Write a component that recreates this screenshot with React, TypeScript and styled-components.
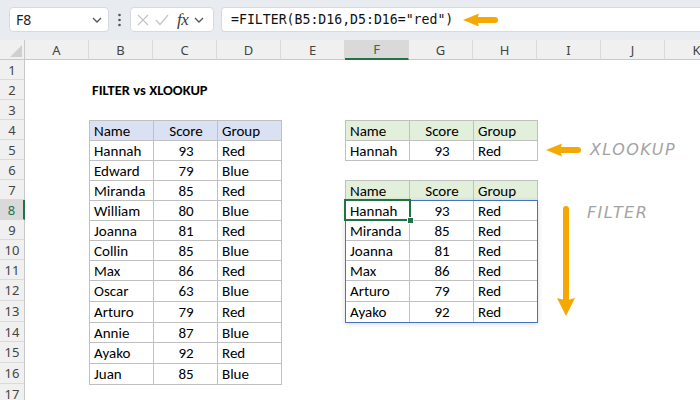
import React from "react";
import styled, { createGlobalStyle } from "styled-components";

const GlobalStyle = createGlobalStyle`
  html, body {
    margin: 0;
    padding: 0;
    background: #ffffff;
  }
  body {
    width: 700px;
    height: 400px;
    overflow: hidden;
    font-family: Calibri, Carlito, Lato, "Liberation Sans", sans-serif;
  }
`;

// data
const COLS = ["A", "B", "C", "D", "E", "F", "G", "H", "I", "J", "K"];
const ROW_HEIGHTS = [20, 20, 20, 20, 20, 20, 20, 20, 20, 20, 20, 21, 21, 20, 21, 21, 20];

type Rec = [string, number, string];

const people: Rec[] = [
    ["Hannah", 93, "Red"],
    ["Edward", 79, "Blue"],
    ["Miranda", 85, "Red"],
    ["William", 80, "Blue"],
    ["Joanna", 81, "Red"],
    ["Collin", 85, "Blue"],
    ["Max", 86, "Red"],
    ["Oscar", 63, "Blue"],
    ["Arturo", 79, "Red"],
    ["Annie", 87, "Blue"],
    ["Ayako", 92, "Red"],
    ["Juan", 85, "Blue"],
];

const lookup: Rec[] = [["Hannah", 93, "Red"]];
const filtered: Rec[] = people.filter((p) => p[2] === "Red");

// styles
const Frame = styled.div`
    width: 700px;
    height: 400px;
    overflow: hidden;
    display: flex;
    flex-direction: column;
`;

const FormulaBar = styled.div`
    height: 40px;
    flex: none;
    box-sizing: border-box;
    padding: 7px 0 0 9px;
    background: #e8ecf0;
    display: flex;
    align-items: flex-start;
`;

const NameBox = styled.div`
    width: 100px;
    height: 25px;
    box-sizing: border-box;
    background: #fff;
    border: 1px solid #d6d9dd;
    border-radius: 4px;
    display: flex;
    align-items: center;
    justify-content: space-between;
    padding: 0 6px 0 6px;
    font-family: "Segoe UI", "Noto Sans", sans-serif;
    font-size: 14px;
    color: #222;
`;

const Dots = styled.div`
    width: 21px;
    height: 25px;
    display: flex;
    align-items: center;
    justify-content: center;
`;

const FxBox = styled.div`
    width: 84px;
    height: 25px;
    box-sizing: border-box;
    background: #fff;
    border: 1px solid #d6d9dd;
    border-radius: 4px;
    display: flex;
    align-items: center;
    gap: 6px;
    padding: 0 4px 0 6px;
`;

const Fx = styled.span`
    font-family: "Liberation Serif", "DejaVu Serif", serif;
    font-style: italic;
    font-size: 17px;
    color: #3a3a3a;
    margin-left: 2px;
    letter-spacing: -0.5px;
`;

const FormulaInput = styled.div`
    flex: 1;
    margin-left: 7px;
    height: 25px;
    box-sizing: border-box;
    background: #fff;
    border: 1px solid #d6d9dd;
    border-right: none;
    border-radius: 4px 0 0 4px;
    display: flex;
    align-items: center;
    padding-left: 9px;
    font-family: "DejaVu Sans Mono", "Liberation Mono", monospace;
    font-size: 13.2px;
    color: #111;
    white-space: nowrap;
`;

const Sheet = styled.div`
    display: grid;
    grid-template-columns: 25px repeat(${COLS.length}, 64px);
    grid-template-rows: 20px ${ROW_HEIGHTS.map((h) => `${h}px`).join(" ")};
    background: #fff;
`;

const Corner = styled.div`
    grid-column: 1;
    grid-row: 1;
    box-sizing: border-box;
    background: #f0f0f0;
    border-right: 1px solid #c8c8c8;
    border-bottom: 1px solid #c8c8c8;
    display: flex;
    align-items: flex-end;
    justify-content: flex-end;
    padding: 0 2px 2px 0;
`;

const ColHeader = styled.div<{ $col: number; $active?: boolean }>`
    grid-column: ${(p) => p.$col};
    grid-row: 1;
    box-sizing: border-box;
    background: ${(p) => (p.$active ? "#d9d9d9" : "#f0f0f0")};
    border-right: 1px solid #d9d9d9;
    border-bottom: ${(p) => (p.$active ? "2px solid #217346" : "1px solid #c8c8c8")};
    display: flex;
    align-items: center;
    justify-content: center;
    font-family: "Segoe UI", "Noto Sans", sans-serif;
    font-size: 13px;
    color: ${(p) => (p.$active ? "#217346" : "#444")};
`;

const RowHeader = styled.div<{ $row: number; $active?: boolean }>`
    grid-column: 1;
    grid-row: ${(p) => p.$row + 1};
    box-sizing: border-box;
    background: ${(p) => (p.$active ? "#d9d9d9" : "#f0f0f0")};
    border-right: ${(p) => (p.$active ? "2px solid #217346" : "1px solid #c8c8c8")};
    border-bottom: 1px solid #dadada;
    display: flex;
    align-items: center;
    justify-content: center;
    font-family: "Segoe UI", "Noto Sans", sans-serif;
    font-size: 13px;
    color: ${(p) => (p.$active ? "#217346" : "#444")};
`;

const Title = styled.div`
    grid-column: 3 / span 3;
    grid-row: 3;
    display: flex;
    align-items: center;
    padding-left: 3px;
    font-weight: 700;
    font-size: 14.5px;
    color: #000;
`;

const Table = styled.div<{ $col: number; $row: number; $rows: number }>`
    grid-column: ${(p) => p.$col + 1} / span 3;
    grid-row: ${(p) => p.$row + 1} / span ${(p) => p.$rows};
    display: grid;
    grid-template-columns: subgrid;
    grid-template-rows: subgrid;
`;

const Cell = styled.div<{ $head?: boolean; $tone?: "blue" | "green"; $center?: boolean; $last?: boolean; $bottom?: boolean }>`
    box-sizing: border-box;
    border-left: 1px solid #c0c0c0;
    border-top: 1px solid #c0c0c0;
    ${(p) => p.$last && "border-right: 1px solid #c0c0c0; margin-right: -1px;"}
    ${(p) => p.$bottom && "border-bottom: 1px solid #c0c0c0; margin-bottom: -1px;"}
    background: ${(p) => (!p.$head ? "#fff" : p.$tone === "green" ? "#e2efda" : "#d9e1f2")};
    display: flex;
    align-items: center;
    justify-content: ${(p) => (p.$center ? "center" : "flex-start")};
    padding: 0 3px 0 4px;
    font-size: 15px;
    color: #000;
    white-space: nowrap;
`;

const Spill = styled.div`
    grid-column: 7 / span 3;
    grid-row: 9 / span 6;
    box-sizing: border-box;
    border: 1px solid #4472c4;
    margin: 0 -1px -1px 0;
    box-shadow: 0 1px 5px rgba(0, 0, 0, 0.14);
    z-index: 1;
    pointer-events: none;
`;

const ActiveCell = styled.div`
    grid-column: 7;
    grid-row: 9;
    position: relative;
    box-sizing: border-box;
    border: 2px solid #217346;
    margin: -1px -2px -1px -1px;
    z-index: 2;
    pointer-events: none;

    &::after {
        content: "";
        position: absolute;
        right: -5px;
        bottom: -5px;
        width: 5px;
        height: 5px;
        background: #217346;
        border: 1px solid #fff;
    }
`;

const Note = styled.div<{ $row: number; $rows?: number; $vertical?: boolean }>`
    grid-column: 10 / span 3;
    grid-row: ${(p) => p.$row + 1} / span ${(p) => p.$rows ?? 1};
    display: flex;
    align-items: ${(p) => (p.$vertical ? "flex-start" : "center")};
    gap: ${(p) => (p.$vertical ? "12px" : "8px")};
    padding: ${(p) => (p.$vertical ? "6px 0 0 20px" : "0 0 0 9px")};
`;

const NoteLabel = styled.span`
    font-family: "DejaVu Sans", "Liberation Sans", sans-serif;
    font-style: italic;
    font-weight: 300;
    font-size: 16px;
    letter-spacing: 1.4px;
    color: #a3a3a3;
    line-height: 14px;
`;

const ORANGE = "#f5a800";

// icons
const Chevron = () => (
    <svg width="10" height="6" viewBox="0 0 10 6">
        <path d="M1 1 L5 5 L9 1" fill="none" stroke="#555" strokeWidth="1.3" />
    </svg>
);

const ArrowLeft = () => (
    <svg width="36" height="16" viewBox="0 0 36 16">
        <line x1="13" y1="8" x2="32" y2="8" stroke={ORANGE} strokeWidth="6" strokeLinecap="round" />
        <path d="M0 8 L16 1.5 Q13 8 16 14.5 Z" fill={ORANGE} />
    </svg>
);

const ArrowDown = () => (
    <svg width="18" height="110" viewBox="0 0 18 110">
        <line x1="9" y1="3" x2="9" y2="94" stroke={ORANGE} strokeWidth="6" strokeLinecap="round" />
        <path d="M0 92 Q9 95 18 92 L9 110 Z" fill={ORANGE} />
    </svg>
);

const TableBlock = ({ col, row, rows, tone }: { col: number; row: number; rows: Rec[]; tone: "blue" | "green" }) => (
    <Table $col={col} $row={row} $rows={rows.length + 1}>
        {["Name", "Score", "Group"].map((h, i) => (
            <Cell key={h} $head $tone={tone} $center={i === 1} $last={i === 2}>
                {h}
            </Cell>
        ))}
        {rows.map((r, ri) =>
            r.map((v, i) => (
                <Cell key={`${ri}-${i}`} $center={i === 1} $last={i === 2} $bottom={ri === rows.length - 1}>
                    {v}
                </Cell>
            ))
        )}
    </Table>
);

// markup
const App = () => {
    return (
        <>
            <GlobalStyle />
            <Frame>
                <FormulaBar>
                    <NameBox>
                        <span>F8</span>
                        <Chevron />
                    </NameBox>
                    <Dots>
                        <svg width="3" height="14" viewBox="0 0 3 14">
                            <circle cx="1.5" cy="2" r="1.3" fill="#555" />
                            <circle cx="1.5" cy="7" r="1.3" fill="#555" />
                            <circle cx="1.5" cy="12" r="1.3" fill="#555" />
                        </svg>
                    </Dots>
                    <FxBox>
                        <svg width="12" height="12" viewBox="0 0 12 12">
                            <path d="M1 1 L11 11 M11 1 L1 11" stroke="#c4c4c4" strokeWidth="1.2" />
                        </svg>
                        <svg width="14" height="12" viewBox="0 0 14 12">
                            <path d="M1 6 L5 10.5 L13 1" fill="none" stroke="#c4c4c4" strokeWidth="1.2" />
                        </svg>
                        <Fx>fx</Fx>
                        <Chevron />
                    </FxBox>
                    <FormulaInput>
                        =FILTER(B5:D16,D5:D16="red")
                        <span style={{ marginLeft: 10, display: "flex" }}>
                            <ArrowLeft />
                        </span>
                    </FormulaInput>
                </FormulaBar>
                <Sheet>
                    <Corner>
                        <svg width="12" height="12" viewBox="0 0 12 12">
                            <path d="M12 0 L12 12 L0 12 Z" fill="#cfcfcf" />
                        </svg>
                    </Corner>
                    {COLS.map((c, i) => (
                        <ColHeader key={c} $col={i + 2} $active={c === "F"}>
                            {c}
                        </ColHeader>
                    ))}
                    {ROW_HEIGHTS.map((_, i) => (
                        <RowHeader key={i} $row={i + 1} $active={i + 1 === 8}>
                            {i + 1}
                        </RowHeader>
                    ))}
                    <Title>FILTER vs XLOOKUP</Title>
                    <TableBlock col={2} row={4} rows={people} tone="blue" />
                    <TableBlock col={6} row={4} rows={lookup} tone="green" />
                    <TableBlock col={6} row={7} rows={filtered} tone="green" />
                    <Spill />
                    <ActiveCell />
                    <Note $row={5}>
                        <ArrowLeft />
                        <NoteLabel>XLOOKUP</NoteLabel>
                    </Note>
                    <Note $row={8} $rows={6} $vertical>
                        <ArrowDown />
                        <NoteLabel>FILTER</NoteLabel>
                    </Note>
                </Sheet>
            </Frame>
        </>
    );
};

export default App;
